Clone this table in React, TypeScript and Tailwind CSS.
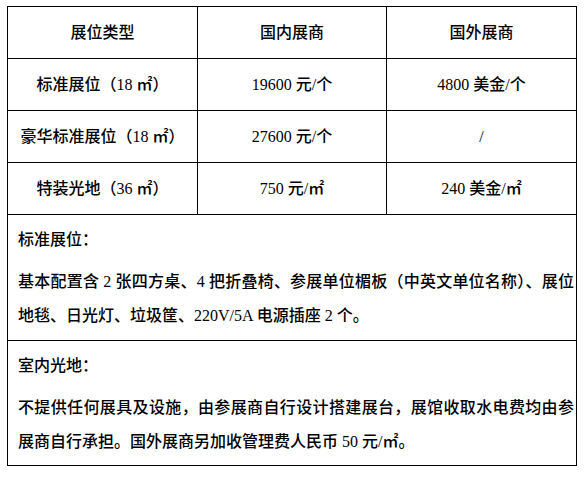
const rows = [
  ["标准展位（18 ㎡）", "19600 元/个", "4800 美金/个"],
  ["豪华标准展位（18 ㎡）", "27600 元/个", "/"],
  ["特装光地（36 ㎡）", "750 元/㎡", "240 美金/㎡"],
];

function Row({ cells }: { cells: string[] }) {
  return (
    <div className="grid grid-cols-[190px_189px_189px] h-[52px] border-b border-black">
      {cells.map((c, i) => (
        <div
          key={i}
          className={
            "flex items-center justify-center " + (i < 2 ? "border-r border-black" : "")
          }
        >
          {c}
        </div>
      ))}
    </div>
  );
}

function Note({ title, lines, last }: { title: string; lines: string[]; last?: boolean }) {
  return (
    <div
      className={
        "pl-[10px] pr-[2px] pt-[8px] leading-[34px] " +
        (last ? "h-[124px]" : "h-[126px] border-b border-black")
      }
    >
      <p>{title}</p>
      <p className="mt-[8px]">
        {lines.map((l, i) => (
          <span
            key={i}
            className={"block " + (i < lines.length - 1 ? "text-justify [text-align-last:justify]" : "")}
          >
            {l}
          </span>
        ))}
      </p>
    </div>
  );
}

export default function App() {
  return (
    <div className="w-[585px] h-[477px] bg-white pt-[6px] pl-[7px] text-black text-[16px] font-medium font-['Liberation_Serif','Noto_Sans_CJK_SC',serif]">
      <div className="w-[570px] border border-black">
        <Row cells={["展位类型", "国内展商", "国外展商"]} />
        {rows.map((r, i) => (
          <Row key={i} cells={r} />
        ))}
        <Note
          title="标准展位："
          lines={[
            "基本配置含 2 张四方桌、4 把折叠椅、参展单位楣板（中英文单位名称）、展位",
            "地毯、日光灯、垃圾筐、220V/5A 电源插座 2 个。",
          ]}
        />
        <Note
          title="室内光地："
          last
          lines={[
            "不提供任何展具及设施，由参展商自行设计搭建展台，展馆收取水电费均由参",
            "展商自行承担。国外展商另加收管理费人民币 50 元/㎡。",
          ]}
        />
      </div>
    </div>
  );
}
